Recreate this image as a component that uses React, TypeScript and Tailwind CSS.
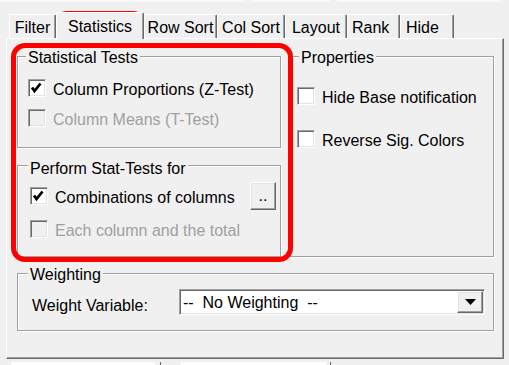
import { ReactNode } from 'react'

const raised =
  'border border-t-white border-l-white border-r-[#696969] border-b-[#696969] shadow-[inset_-1px_-1px_0_#a0a0a0,inset_1px_1px_0_#e3e3e3]'
const sunken =
  'border border-t-[#a0a0a0] border-l-[#a0a0a0] border-r-white border-b-white shadow-[inset_1px_1px_0_#696969,inset_-1px_-1px_0_#e3e3e3]'

function CheckBox({ checked, disabled }: { checked?: boolean; disabled?: boolean }) {
  return (
    <span className={`w-[18px] h-[18px] shrink-0 ${sunken} ${disabled ? 'bg-[#f0f0f0]' : 'bg-white'}`}>
      {checked && (
        <svg viewBox="0 0 16 16" className="w-full h-full">
          <polyline points="3,7.5 5.5,11 11.5,3.5" fill="none" stroke="#000" strokeWidth="2.8" strokeLinejoin="miter" />
        </svg>
      )}
    </span>
  )
}

function Row({ label, checked, disabled }: { label: string; checked?: boolean; disabled?: boolean }) {
  return (
    <div className="flex items-start gap-[7px] h-[18px]">
      <CheckBox checked={checked} disabled={disabled} />
      <span className={`pt-[2px] ${disabled ? 'text-[#a0a0a0]' : 'text-black'}`}>{label}</span>
    </div>
  )
}

function Group({ title, titleCls, className, children }: {
  title: string
  titleCls: string
  className: string
  children: ReactNode
}) {
  return (
    <div className={`relative border border-[#a0a0a0] shadow-[inset_1px_1px_0_#fff,1px_1px_0_#fff] ${className}`}>
      <span className={`absolute ${titleCls} px-[2px] bg-[#f0f0f0]`}>{title}</span>
      {children}
    </div>
  )
}

const tabs = [
  { label: 'Filter', cls: 'w-[47px] justify-center' },
  { label: 'Statistics', cls: 'w-[88px] justify-center', active: true },
  { label: 'Row Sort', cls: 'w-[73px] justify-center' },
  { label: 'Col Sort', cls: 'w-[68px] justify-center' },
  { label: 'Layout', cls: 'w-[62px] justify-center' },
  { label: 'Rank', cls: 'w-[53px] pl-[4px]' },
  { label: 'Hide', cls: 'w-[54px] pl-[5px]' },
]

export default function App() {
  return (
    <div className="relative w-[509px] h-[365px] overflow-hidden bg-[#f0f0f0] text-[16px] leading-[18px] text-black font-['Liberation_Sans',Arial,sans-serif]">
      <div className="flex h-[2px]">
        <div className="w-[244px] bg-[#fafafa]" />
        <div className="w-[8px]" />
        <div className="w-[78px] bg-[#fafafa]" />
        <div className="w-[7px]" />
        <div className="w-[163px] bg-[#fafafa]" />
      </div>

      {/* tab strip */}
      <div className="flex items-end pl-[9px] mt-[10px]">
        {tabs.map((t) =>
          t.active ? (
            <div key={t.label}
              className={`relative z-10 flex h-[27px] -mb-px pt-[5px] bg-[#f0f0f0] border-t border-l border-white border-r border-r-[#696969] shadow-[inset_-1px_0_0_#a0a0a0] rounded-t-[2px] ${t.cls}`}>
              {t.label}
            </div>
          ) : (
            <div key={t.label}
              className={`flex h-[24px] pt-[4px] border-t border-l border-white border-r border-r-[#696969] shadow-[inset_-1px_0_0_#a0a0a0] rounded-t-[2px] ${t.cls}`}>
              {t.label}
            </div>
          )
        )}
      </div>

      {/* tab page */}
      <div className="ml-[6px] w-[498px] pt-[17px] pl-[10px] pr-[9px] pb-[27px] border-t border-l border-white border-r border-b border-r-[#696969] border-b-[#696969] shadow-[inset_-1px_-1px_0_#a0a0a0]">
        <div className="grid grid-cols-[264px_206px] gap-x-[7px]">
          <div className="flex flex-col gap-[17px]">
            <Group title="Statistical Tests" titleCls="top-[-8px] left-[8px]" className="flex flex-col gap-[12px] pl-[10px] pt-[22px] pb-[20px]">
              <Row label="Column Proportions (Z-Test)" checked />
              <Row label="Column Means (T-Test)" disabled />
            </Group>
            <Group title="Perform Stat-Tests for" titleCls="top-[-6px] left-[10px]" className="flex flex-col gap-[10px] pl-[12px] pr-[4px] pt-[16px] pb-[18px]">
              <div className="flex items-center h-[28px]">
                <Row label="Combinations of columns" checked />
                <button className={`ml-auto w-[26px] h-[28px] bg-[#f0f0f0] leading-[18px] ${raised}`}>..</button>
              </div>
              <Row label="Each column and the total" disabled />
            </Group>
          </div>
          <Group title="Properties" titleCls="top-[-8px] left-[10px]" className="flex flex-col gap-[25px] pl-[8px] pt-[30px]">
            <Row label="Hide Base notification" />
            <Row label="Reverse Sig. Colors" />
          </Group>
        </div>

        <Group title="Weighting" titleCls="top-[-8px] left-[10px]" className="flex items-start mt-[16px] pl-[14px] pr-[8px] pt-[15px] pb-[15px]">
          <span className="mt-[8px]">Weight Variable:</span>
          <div className={`ml-auto flex items-center w-[306px] h-[26px] bg-white ${sunken}`}>
            <span className="flex-1 pl-[3px] pt-[2px] whitespace-pre">--  No Weighting  --</span>
            <div className={`flex items-center justify-center w-[26px] h-[22px] mr-px bg-[#f0f0f0] ${raised}`}>
              <svg width="11" height="6" viewBox="0 0 11 6">
                <polygon points="0,0 11,0 5.5,6" fill="#000" />
              </svg>
            </div>
          </div>
        </Group>
      </div>

      <div className="flex h-[3px] mt-[3px]">
        <div className="ml-[11px] w-[144px] bg-white" />
        <div className="ml-[5px] w-px bg-[#696969]" />
        <div className="ml-[20px] w-[145px] bg-white" />
        <div className="ml-[4px] w-px bg-[#696969]" />
      </div>

      {/* red annotation marks */}
      <div className="absolute left-[56px] top-[11px] w-[88px] h-[25px] border-[4px] border-[#ff0000] rounded-[10px]" />
      <div className="absolute left-[11px] top-[43px] w-[282px] h-[219px] border-[5px] border-[#ff0000] rounded-[14px]" />
    </div>
  )
}
